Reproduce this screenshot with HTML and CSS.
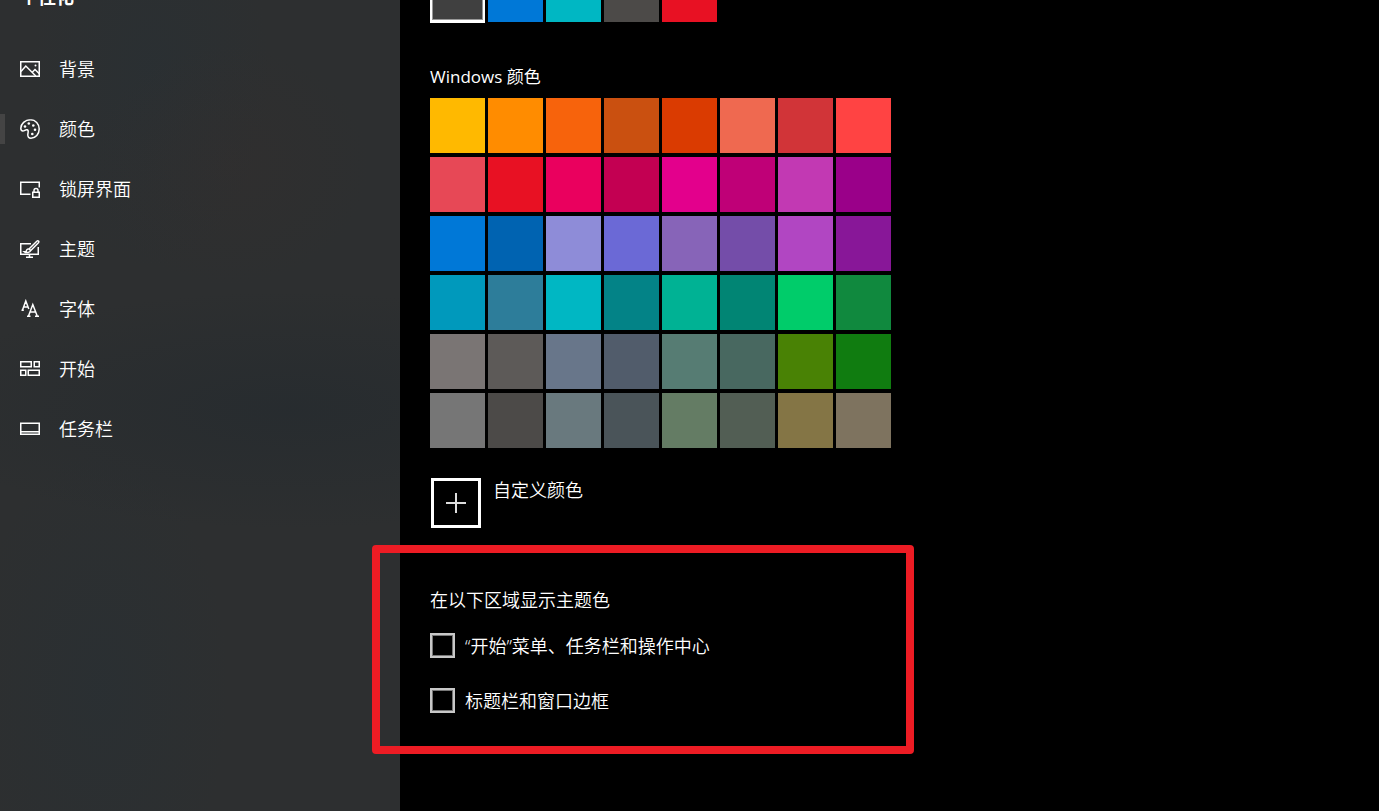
FILE: index.html
```
<!DOCTYPE html>
<html lang="zh-CN">
<head>
<meta charset="utf-8">
<title>个性化</title>
<link rel="stylesheet" href="styles.css">
</head>
<body>
<div class="settings">
  <aside class="sidebar">
    <h1 class="sidebar-title">个性化</h1>
    <nav class="nav">
      <a class="nav-item" href="#background">
        <svg class="icon" viewBox="0 0 20 20"><path d="M.75 2.750h18.500v14.500H.75z"/><path d="M1 12.500l4.800-5.500 10 10M12.500 13l2.500-2.500 4.300 4.300"/><circle class="dot" cx="15.500" cy="6.500" r="1"/></svg>
        <span>背景</span>
      </a>
      <a class="nav-item current" href="#colors" aria-current="page">
        <svg class="icon" viewBox="0 0 20 20"><path d="M10.500.8C5 .8.800 4.700.800 9.300c0 1.700.8 2.700 2.100 2.700 1.700 0 2.500-1.700 4.300-1.200 1.900.6.800 2.800.6 4.600-.2 2.300 1 3.800 3.200 3.800 4.600 0 8.200-4.200 8.200-9.200 0-5.300-3.700-9.200-8.700-9.200z"/><g class="dot"><circle cx="5" cy="7.500" r="1.300"/><circle cx="8.800" cy="4.500" r="1.300"/><circle cx="13.300" cy="6.500" r="1.300"/><circle cx="15" cy="10.800" r="1.300"/><circle cx="12.300" cy="15" r="1.300"/></g></svg>
        <span>颜色</span>
      </a>
      <a class="nav-item" href="#lockscreen">
        <svg class="icon" viewBox="0 0 20 20"><path d="M10.500 15.250H.75V3.250h18.500V8.500M12.750 13.250h6.500v5h-6.500zM14 13v-1.500a2 2 0 0 1 4 0V13"/></svg>
        <span>锁屏界面</span>
      </a>
      <a class="nav-item" href="#themes">
        <svg class="icon" viewBox="0 0 20 20"><path d="M11 4.750H.75v10.500h17.500V8M9.500 15.500v2.500M6 18.250h7"/><path d="M9 10l7.800-7.800c1.300-1.200 2.700.2 1.600 1.500L10.800 11.600M9 10c-2-.3-2.700 1-2.800 2.800H4.500c1.500 1.100 5.500 1 6.300-1.200z"/></svg>
        <span>主题</span>
      </a>
      <a class="nav-item" href="#fonts">
        <svg class="icon" viewBox="0 0 20 20"><path d="M2.500 11L5.800 2l3 8M3.700 8h4M1.500 11.250h2.300M8.500 17l4.300-11.500L17.200 17M10 13h5.500M7 17.250h3.500M15 17.250h4"/></svg>
        <span>字体</span>
      </a>
      <a class="nav-item" href="#start">
        <svg class="icon" viewBox="0 0 20 20"><path d="M.75 2.750h10.500v5H.75zM14.250 2.750h5v5h-5zM.75 11.250h5v5h-5zM8.250 11.250h11v5h-11z"/></svg>
        <span>开始</span>
      </a>
      <a class="nav-item" href="#taskbar">
        <svg class="icon" viewBox="0 0 20 20"><path d="M.75 4.250h18.500v11H.75zM1 12.750h18"/></svg>
        <span>任务栏</span>
      </a>
    </nav>
  </aside>

  <main class="content">
    <div class="swatches recent">
      <button class="swatch selected" style="background:#404040" aria-label="最近使用的颜色 1"></button>
      <button class="swatch" style="background:#0078d7" aria-label="最近使用的颜色 2"></button>
      <button class="swatch" style="background:#00b7c3" aria-label="最近使用的颜色 3"></button>
      <button class="swatch" style="background:#4c4a48" aria-label="最近使用的颜色 4"></button>
      <button class="swatch" style="background:#e81123" aria-label="最近使用的颜色 5"></button>
    </div>

    <h2 class="heading palette-heading">Windows 颜色</h2>
    <div class="swatches" id="palette">
      <button class="swatch" style="background:#ffb900" aria-label="#ffb900"></button>
      <button class="swatch" style="background:#ff8c00" aria-label="#ff8c00"></button>
      <button class="swatch" style="background:#f7630c" aria-label="#f7630c"></button>
      <button class="swatch" style="background:#ca5010" aria-label="#ca5010"></button>
      <button class="swatch" style="background:#da3b01" aria-label="#da3b01"></button>
      <button class="swatch" style="background:#ef6950" aria-label="#ef6950"></button>
      <button class="swatch" style="background:#d13438" aria-label="#d13438"></button>
      <button class="swatch" style="background:#ff4343" aria-label="#ff4343"></button>
      <button class="swatch" style="background:#e74856" aria-label="#e74856"></button>
      <button class="swatch" style="background:#e81123" aria-label="#e81123"></button>
      <button class="swatch" style="background:#ea005e" aria-label="#ea005e"></button>
      <button class="swatch" style="background:#c30052" aria-label="#c30052"></button>
      <button class="swatch" style="background:#e3008c" aria-label="#e3008c"></button>
      <button class="swatch" style="background:#bf0077" aria-label="#bf0077"></button>
      <button class="swatch" style="background:#c239b3" aria-label="#c239b3"></button>
      <button class="swatch" style="background:#9a0089" aria-label="#9a0089"></button>
      <button class="swatch" style="background:#0078d7" aria-label="#0078d7"></button>
      <button class="swatch" style="background:#0063b1" aria-label="#0063b1"></button>
      <button class="swatch" style="background:#8e8cd8" aria-label="#8e8cd8"></button>
      <button class="swatch" style="background:#6b69d6" aria-label="#6b69d6"></button>
      <button class="swatch" style="background:#8764b8" aria-label="#8764b8"></button>
      <button class="swatch" style="background:#744da9" aria-label="#744da9"></button>
      <button class="swatch" style="background:#b146c2" aria-label="#b146c2"></button>
      <button class="swatch" style="background:#881798" aria-label="#881798"></button>
      <button class="swatch" style="background:#0099bc" aria-label="#0099bc"></button>
      <button class="swatch" style="background:#2d7d9a" aria-label="#2d7d9a"></button>
      <button class="swatch" style="background:#00b7c3" aria-label="#00b7c3"></button>
      <button class="swatch" style="background:#038387" aria-label="#038387"></button>
      <button class="swatch" style="background:#00b294" aria-label="#00b294"></button>
      <button class="swatch" style="background:#018574" aria-label="#018574"></button>
      <button class="swatch" style="background:#00cc6a" aria-label="#00cc6a"></button>
      <button class="swatch" style="background:#10893e" aria-label="#10893e"></button>
      <button class="swatch" style="background:#7a7574" aria-label="#7a7574"></button>
      <button class="swatch" style="background:#5d5a58" aria-label="#5d5a58"></button>
      <button class="swatch" style="background:#68768a" aria-label="#68768a"></button>
      <button class="swatch" style="background:#515c6b" aria-label="#515c6b"></button>
      <button class="swatch" style="background:#567c73" aria-label="#567c73"></button>
      <button class="swatch" style="background:#486860" aria-label="#486860"></button>
      <button class="swatch" style="background:#498205" aria-label="#498205"></button>
      <button class="swatch" style="background:#107c10" aria-label="#107c10"></button>
      <button class="swatch" style="background:#767676" aria-label="#767676"></button>
      <button class="swatch" style="background:#4c4a48" aria-label="#4c4a48"></button>
      <button class="swatch" style="background:#69797e" aria-label="#69797e"></button>
      <button class="swatch" style="background:#4a5459" aria-label="#4a5459"></button>
      <button class="swatch" style="background:#647c64" aria-label="#647c64"></button>
      <button class="swatch" style="background:#525e54" aria-label="#525e54"></button>
      <button class="swatch" style="background:#847545" aria-label="#847545"></button>
      <button class="swatch" style="background:#7e735f" aria-label="#7e735f"></button>
    </div>

    <div class="custom">
      <button class="add" id="add-color" aria-labelledby="add-label">
        <svg class="plus" viewBox="0 0 20 20"><path d="M10 0v20M0 10h20"/></svg>
      </button>
      <label id="add-label" for="add-color">自定义颜色</label>
    </div>

    <section class="surfaces">
      <h2 class="heading">在以下区域显示主题色</h2>
      <div class="option"><input class="check" type="checkbox" id="surface-start"><label for="surface-start">“开始”菜单、任务栏和操作中心</label></div>
      <div class="option"><input class="check" type="checkbox" id="surface-title"><label for="surface-title">标题栏和窗口边框</label></div>
      <div class="highlight" aria-hidden="true"></div>
    </section>
  </main>
</div>
</body>
</html>
```
FILE: styles.css
```
* { box-sizing: border-box; }

body {
  margin: 0;
  background: #000;
  color: #fff;
  font: 350 18px/24px "Open Sans", "Noto Sans CJK SC", sans-serif;
}

.settings {
  display: grid;
  grid-template-columns: 400px 1fr;
  height: 100vh;
  overflow: hidden;
}

.sidebar {
  background:
    radial-gradient(ellipse 380px 120px at 290px 410px, rgb(32 40 46 / 45%), transparent),
    radial-gradient(ellipse 140px 120px at 230px 165px, rgb(54 46 44 / 30%), transparent),
    radial-gradient(ellipse 120px 200px at 150px 70px, rgb(38 48 54 / 40%), transparent),
    radial-gradient(ellipse 130px 240px at 100px 690px, rgb(38 48 54 / 40%), transparent),
    #2d2f30;
}

.sidebar-title {
  margin: -15px 0 30px 20px;
  font-size: 18px;
  line-height: 24px;
}

.nav { display: flex; flex-direction: column; }

.nav-item {
  display: flex;
  align-items: center;
  gap: 19px;
  height: 60px;
  padding-left: 20px;
  color: #fff;
  text-decoration: none;
}

.current { padding-left: 0; }

.current::before {
  content: "";
  width: 5px;
  height: 30px;
  margin-right: -4px;
  background: #444;
}

.icon {
  width: 20px;
  height: 20px;
  fill: none;
  stroke: #fff;
  stroke-width: 1.5;
}

.dot { fill: #fff; stroke: none; }

.content { padding: 0 30px; }

.swatches {
  display: grid;
  grid-template-columns: repeat(8, 55px);
  grid-auto-rows: 55px;
  gap: 4px 3px;
}

.recent { margin-top: -33px; }

.swatch { padding: 0; border: 0; }

.selected {
  border: 2px solid #fff;
  box-shadow: inset 0 0 0 1px #999, 0 1px 0 #fff;
}

.heading {
  margin: 0;
  font-size: 18px;
  font-weight: inherit;
}

.palette-heading {
  margin: 43px 0 9px;
  font-size: 17px;
  font-weight: 400;
}

.custom {
  display: flex;
  gap: 12px;
  margin: 30px 0 0 1px;
}

.add {
  display: grid;
  place-items: center;
  width: 50px;
  height: 50px;
  padding: 0;
  border: 3px solid #fff;
  background: #000;
}

.plus {
  width: 20px;
  height: 20px;
  stroke: #ddd;
  stroke-width: 2;
}

.surfaces {
  position: relative;
  display: grid;
  gap: 30px;
  margin-top: 60px;
}

.surfaces .heading { margin-bottom: -9px; }

.option {
  display: flex;
  align-items: center;
  gap: 10px;
  height: 25px;
}

.check {
  appearance: none;
  width: 25px;
  height: 25px;
  margin: 0;
  border: 2px solid #c8c8c8;
  background: #000;
  box-shadow: inset 0 0 0 1px #777;
}

.highlight {
  position: absolute;
  top: -43px;
  left: -58px;
  width: 542px;
  height: 209px;
  border: 8px solid #ed1c24;
  border-radius: 4px;
  pointer-events: none;
}
```
